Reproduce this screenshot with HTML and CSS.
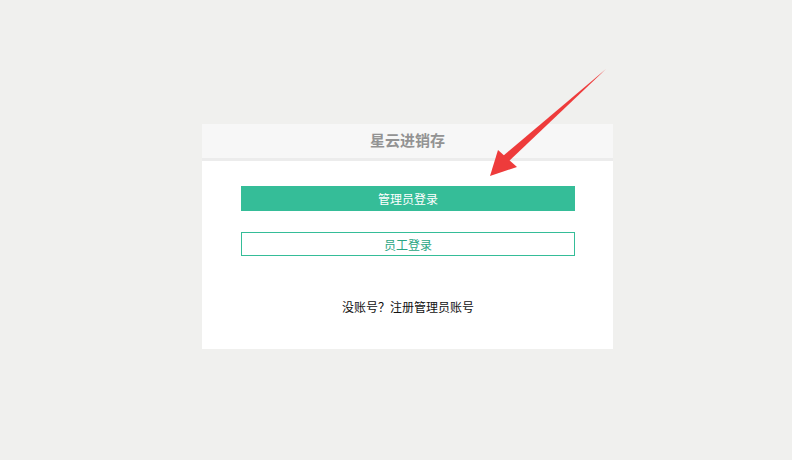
FILE: index.html
```html
<!DOCTYPE html>
<html lang="zh-CN">
<head>
  <meta charset="UTF-8">
  <title>星云进销存</title>
  <link rel="stylesheet" href="styles.css">
</head>
<body>
  <div class="login-box">
    <div class="login-title">星云进销存</div>
    <div class="login-body">
      <button class="btn btn-primary">管理员登录</button>
      <button class="btn btn-outline">员工登录</button>
      <p class="register">没账号？注册管理员账号</p>
    </div>
  </div>

  <svg class="arrow" width="792" height="460" viewBox="0 0 792 460">
    <path d="M606 69 L508 162 L503 156 Z" fill="#ee3b3b"/>
    <path d="M490 176 L498 150 L517 167 Z" fill="#ee3b3b"/>
  </svg>
</body>
</html>
```

FILE: styles.css
```css
body {
  margin: 0;
  background-color: #f0f0ee;
  font-family: "Liberation Sans", "Noto Sans CJK SC", sans-serif;
  min-height: 460px;
  position: relative;
}
.login-box {
  width: 411px;
  margin-left: 202px;
  padding-top: 124px;
}
.login-title {
  height: 34px;
  line-height: 34px;
  text-align: center;
  background-color: #f7f7f7;
  border-bottom: 3px solid #ececec;
  color: #939393;
  font-size: 15px;
  font-weight: bold;
}
.login-body {
  background-color: #fff;
  padding: 25px 38px 0 39px;
  height: 163px;
  display: flex;
  flex-direction: column;
}
.btn {
  height: 25px;
  padding: 0;
  font-family: inherit;
  font-size: 12px;
  border: 1px solid #35bd98;
  cursor: pointer;
}
.btn-primary {
  background-color: #35bd98;
  color: #fff;
  margin-bottom: 21px;
}
.btn-outline {
  background-color: #fff;
  color: #2aa583;
  height: 24px;
}
.register {
  margin: 42px 0 0;
  text-align: center;
  font-size: 12px;
  color: #111;
}
.arrow {
  position: absolute;
  left: 0;
  top: 0;
  pointer-events: none;
}
```
